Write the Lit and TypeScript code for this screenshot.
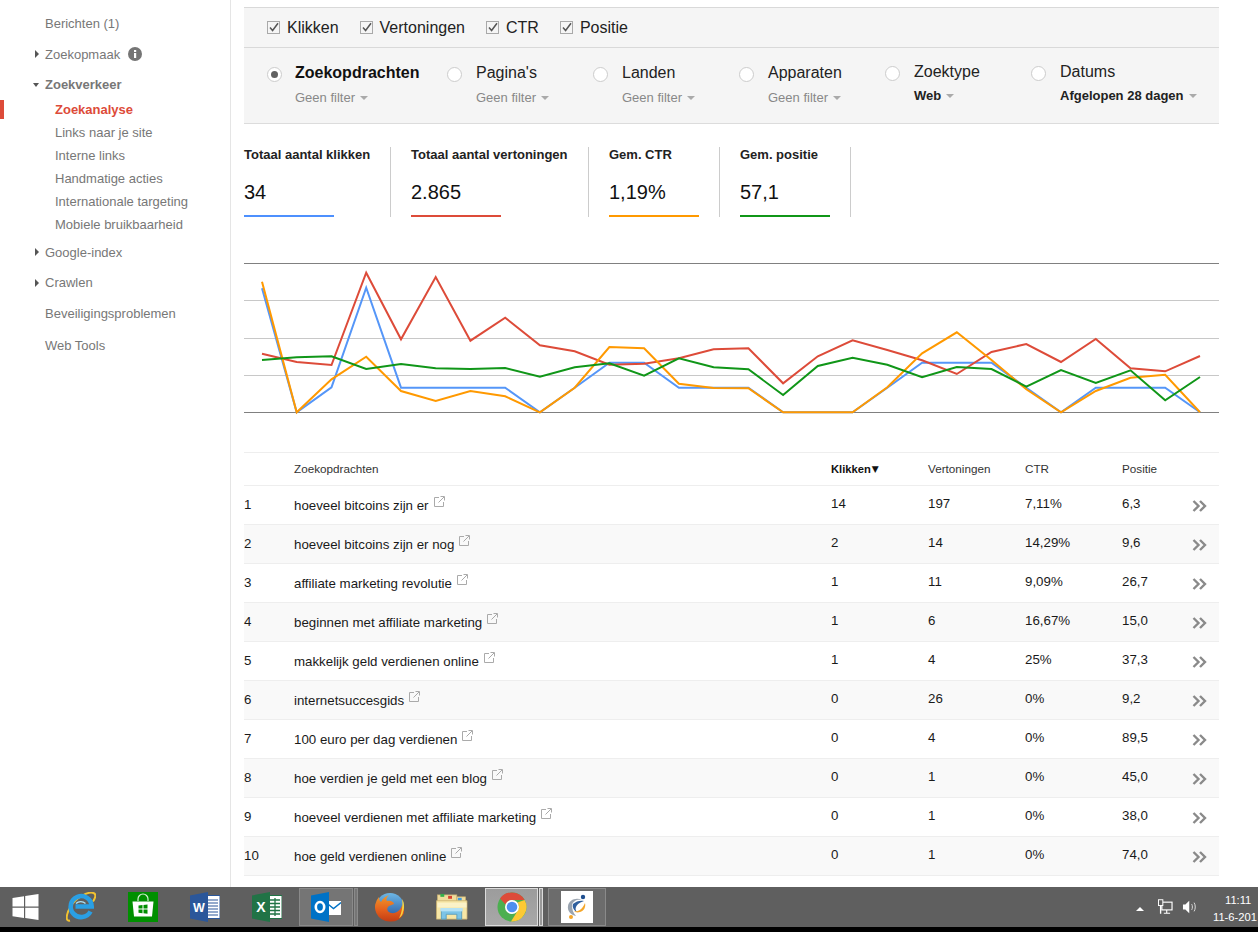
import { LitElement, html, css, svg } from "lit";
import { customElement } from "lit/decorators.js";

const red = [353.7,362,365,272.7,339.3,277,340.7,317.7,345.3,351.3,364.7,363.7,358.3,349.3,348.3,383.3,356.3,340.3,350,360.3,374,352,344,362,339,368.3,371.3,356];
const blue = [288.3,412.3,387.3,287.7,387.7,387.7,387.7,387.7,412.3,387.7,362.7,362.7,387.7,387.7,387.7,412.3,412.3,412.3,387.7,362.7,362.7,362.7,387.7,412.3,387.7,387.7,387.7,412.3];
const orange = [281.7,412.3,379.3,356.7,391,401,391,396.3,412.3,387.7,347,348.3,383.7,388,388.3,412.3,412.3,412.3,387.3,353.3,332.3,360,389.3,412.3,391,377.7,374.7,412.3];
const green = [360,357.3,356.3,369,364,368.3,369,368,376.7,367.3,363.3,375.7,358.3,367.3,369.3,395,366,357.7,364.7,377.3,367,369,386.7,370,383,370.3,400.3,377];
const pts = (a: number[]) => a.map((y, i) => `${(262 + i * 34.74).toFixed(1)},${y}`).join(" ");

const rows = [
  ["1","hoeveel bitcoins zijn er","14","197","7,11%","6,3"],
  ["2","hoeveel bitcoins zijn er nog","2","14","14,29%","9,6"],
  ["3","affiliate marketing revolutie","1","11","9,09%","26,7"],
  ["4","beginnen met affiliate marketing","1","6","16,67%","15,0"],
  ["5","makkelijk geld verdienen online","1","4","25%","37,3"],
  ["6","internetsuccesgids","0","26","0%","9,2"],
  ["7","100 euro per dag verdienen","0","4","0%","89,5"],
  ["8","hoe verdien je geld met een blog","0","1","0%","45,0"],
  ["9","hoeveel verdienen met affiliate marketing","0","1","0%","38,0"],
  ["10","hoe geld verdienen online","0","1","0%","74,0"],
];

const extIcon = html`<svg class="ext" viewBox="0 0 11 11" width="11" height="11"><path d="M5 1.5H.5v9h9V6" fill="none" stroke="#aaa" stroke-width="1"/><path d="M4.5 6.5 10 1M6.5 .5h4v4" fill="none" stroke="#aaa" stroke-width="1"/></svg>`;
const chevrons = html`<svg class="chev" viewBox="0 0 15 12" width="15" height="12"><path d="M1.5 1 6.5 6 1.5 11M8 1l5 5-5 5" fill="none" stroke="#8a8a8a" stroke-width="2.4"/></svg>`;
const check = html`<svg class="cb" viewBox="0 0 13 13" width="13" height="13"><rect x=".5" y=".5" width="12" height="12" fill="#f5f5f5" stroke="#a9a9a9"/><path d="M3 6.5 5.6 9.5 11 2.2" fill="none" stroke="#555" stroke-width="1.5"/></svg>`;

const winIcon = html`<svg viewBox="0 0 26 26" width="27" height="26"><path fill="#fff" d="M0 4 11.5 2.3V12.5H0ZM12.7 2.1 26 0V12.5H12.7ZM0 13.7H11.5V24L0 22.3ZM12.7 13.7H26V26L12.7 24Z"/></svg>`;
const ieIcon = html`<svg viewBox="0 0 30 30" width="30" height="30"><path d="M4 28.500C-1 30 0 22 5 14 10 6 22-1 27.500 1 30.500 2 29.500 6 27 9.500" fill="none" stroke="#f2c230" stroke-width="2"/><path d="M24.500 19.500A10.500 10.500 0 1 1 25.700 14.500H9.500" fill="none" stroke="#2a9fe4" stroke-width="4.600"/><path d="M10 11.500a6.500 6 0 0 1 9.500 0" fill="none" stroke="#a9e2f8" stroke-width="1.300"/></svg>`;
const storeIcon = html`<svg viewBox="0 0 30 30" width="30" height="30"><rect width="30" height="30" fill="#008f00"/><path d="M10 9V7a5 5 0 0 1 10 0v2" fill="none" stroke="#d6efd6" stroke-width="1.200"/><path d="M4.500 9.500h21l-1.500 15H6z" fill="#fff"/><path fill="#008f00" d="M10.500 13.500 14.500 13v3.600h-4ZM15.500 13l4-.6v4.200h-4ZM10.500 17.600h4v3.600l-4-.5ZM15.500 17.600h4v4.200l-4-.6Z"/></svg>`;
const wordIcon = html`<svg viewBox="0 0 30 30" width="30" height="30"><rect x="16" y="3.500" width="14" height="23" fill="#fff" stroke="#2b579a"/><path d="M18 8h10M18 11h10M18 14h10M18 17h10M18 20h10M18 23h10" stroke="#2b579a" stroke-width="1.200"/><path d="M0 3.500 18 0V30L0 26.500Z" fill="#2b579a"/><text x="9" y="20" text-anchor="middle" class="ico-t" font-size="12.500">W</text></svg>`;
const excelIcon = html`<svg viewBox="0 0 30 30" width="30" height="30"><rect x="16" y="3.500" width="14" height="23" fill="#fff" stroke="#217346"/><path d="M18 8h10M18 11.500h10M18 15h10M18 18.500h10M18 22h10M23 6v18" stroke="#217346" stroke-width="1.300"/><path d="M0 3.500 18 0V30L0 26.500Z" fill="#217346"/><text x="9" y="20" text-anchor="middle" class="ico-t" font-size="14">X</text></svg>`;
const outlookIcon = html`<svg viewBox="0 0 30 30" width="30" height="30"><rect x="15" y="9" width="15" height="14" fill="#fff"/><path d="M15 10.500 22.500 16.500 30 10.500" fill="none" stroke="#0072c6" stroke-width="1.400"/><path d="M0 3.500 18 0V30L0 26.500Z" fill="#0072c6"/><ellipse cx="9" cy="15" rx="4.200" ry="5" fill="none" stroke="#fff" stroke-width="2.600"/></svg>`;
const foxIcon = html`<svg viewBox="0 0 30 30" width="30" height="30"><defs><linearGradient id="fx" x1="0" y1="0" x2="0" y2="1"><stop offset="0" stop-color="#f09a2c"/><stop offset=".55" stop-color="#e5611d"/><stop offset="1" stop-color="#c23d14"/></linearGradient><linearGradient id="gl" x1="0" y1="0" x2="0" y2="1"><stop offset="0" stop-color="#6db7e6"/><stop offset="1" stop-color="#1f4f9a"/></linearGradient></defs><circle cx="15" cy="15" r="14" fill="url(#gl)"/><path d="M15 29.500A14.500 14.500 0 0 1 4 5C4 8 5 9 6 10 8 6 11 4 14 3 11 6 11 8 12 9 15 8 19 10 19 12L14 14C11 16 12 20 16 21 21 22 26 18 27 13 29 16 30 20 28 23A14.500 14.500 0 0 1 15 29.500Z" fill="url(#fx)"/><path d="M27 7c2 3 3 8 1 13 0 2-2 5-4 6 3-5 4-13 3-19Z" fill="#f7d23e"/></svg>`;
const folderIcon = html`<svg viewBox="0 0 32 32" width="32" height="31"><rect x="1" y="3" width="20" height="8" fill="#f0dc9c" stroke="#c8b070" stroke-width=".7"/><rect x="4" y="2" width="4" height="3" fill="#34b04a"/><rect x="12" y="4" width="4" height="3" fill="#d8432f"/><rect x="21" y="5" width="9" height="6" fill="#f0dc9c" stroke="#c8b070" stroke-width=".7"/><rect x="22" y="6" width="4" height="3" fill="#3f9be0"/><path d="M0 9h31.500v19H0Z" fill="#f6e6a6" stroke="#c8b070" stroke-width=".8"/><path d="M1 11h30v5H1Z" fill="#fbf2c8"/><path d="M5 28V18h21v10h-5v-5H10v5Z" fill="#7cc4e6" stroke="#4a93b8" stroke-width=".8"/><path d="M4 16.500h23V20H4Z" fill="#b5e2f5"/></svg>`;
const chromeIcon = html`<svg viewBox="0 0 30 30" width="30" height="30"><circle cx="15" cy="15" r="14.500" fill="#4caf50"/><path d="M15 .5A14.500 14.500 0 0 1 27.600 8H15a7 7 0 0 0-6.500 4.500L3 6.500A14.500 14.500 0 0 1 15 .5Z" fill="#dd4b39"/><path d="M27.600 8A14.500 14.500 0 0 1 14 29.500l6.200-10A7 7 0 0 0 20.500 10.500Z" fill="#fcc934"/><circle cx="15" cy="15" r="7" fill="#fff"/><circle cx="15" cy="15" r="5.300" fill="#4d8ff0"/></svg>`;
const appIcon = html`<svg viewBox="0 0 32 32" width="32" height="32"><rect width="32" height="32" fill="#fff"/><path d="M7 15C8 9 15 6 21 9c-5-1-9 1-10 5 0 4 1 8 4 11-5-1-9-5-8-10Z" fill="#9aa4b0"/><path d="M12 13c3-3 8-4 11-3-3 1-7 3-8 6-1 2 0 4 1 5-3-1-5-5-4-8Z" fill="#2f5f9e"/><path d="M24 12c1 4-1 8-5 9-3 1-5 0-6-1 4 1 8-1 11-8Z" fill="#f4a62a"/><circle cx="22" cy="6" r="2.200" fill="#1f4f8f"/><circle cx="10" cy="26" r="2" fill="#f4a62a"/></svg>`;
const netIcon = html`<svg viewBox="0 0 15 16" width="15" height="16"><rect x="4" y="3" width="10.500" height="8" fill="none" stroke="#fff" stroke-width="1.200"/><path d="M9 11v3M6 14.500h6.500" stroke="#fff" stroke-width="1.200"/><rect x=".5" y=".5" width="4.500" height="6" fill="#5f5f5f" stroke="#fff"/><path d="M2.700 6.500V15" stroke="#fff" stroke-width="1.400"/></svg>`;
const volIcon = html`<svg viewBox="0 0 16 16" width="16" height="16"><path d="M1 5.500h2.500L7.500 1.500v13l-4-4H1Z" fill="#fff"/><path d="M10 5c1 1.500 1 4.500 0 6M12.500 3.500c1.600 2.500 1.600 6.500 0 9" fill="none" stroke="#ddd" stroke-width="1"/></svg>`;
const infoIcon = html`<svg class="info" viewBox="0 0 14 14" width="14" height="14"><circle cx="7" cy="7" r="7" fill="#757575"/><rect x="6" y="6" width="2.200" height="5" fill="#fff"/><rect x="6" y="3" width="2.200" height="2" fill="#fff"/></svg>`;

@customElement("app-root")
export class AppRoot extends LitElement {
  static styles = css`
    :host { display: block; height: 932px; overflow: hidden; font-family: "Liberation Sans", Arial, sans-serif; background: #fff; color: #000; }
    .page { display: flex; height: 887px; overflow: hidden; }
    .side { width: 230px; flex: none; border-right: 1px solid #e5e5e5; padding-top: 8px; font-size: 13px; color: #777; }
    .nav { display: flex; align-items: center; padding-left: 45px; position: relative; box-sizing: border-box; }
    .h30 { height: 30px; } .h31 { height: 31px; } .h32 { height: 32px; }
    .first-nav { height: 31px; padding-bottom: 1px; }
    .dn { padding-top: 1px; }
    .over { margin-bottom: -1px; }
    .tri-r { position: absolute; left: 35px; top: 50%; margin-top: -4px; border-left: 4px solid #555; border-top: 4px solid transparent; border-bottom: 4px solid transparent; }
    .tri-d { position: absolute; left: 33px; top: 50%; margin-top: -1px; border-top: 4px solid #555; border-left: 3.5px solid transparent; border-right: 3.5px solid transparent; }
    .strong { font-weight: bold; }
    .info { margin-left: 8px; }
    .sub { height: 23px; display: flex; align-items: center; padding-left: 55px; position: relative; }
    .sub.on { color: #dd4b39; font-weight: bold; }
    .sub.on::before { content: ""; position: absolute; left: 0; top: 2px; width: 4px; height: 19px; background: #dd4b39; }

    .main { width: 975px; margin-left: 13px; padding-top: 7px; flex: none; }
    .bar1 { display: flex; align-items: center; height: 39px; background: #f5f5f5; border-top: 1px solid #d9d9d9; border-bottom: 1px solid #d9d9d9; padding-left: 23px; font-size: 16px; color: #222; }
    .ck { display: flex; align-items: center; margin-right: 21px; }
    .cb { margin-right: 7px; margin-top: -1px; }
    .bar2 { display: flex; height: 75px; background: #f5f5f5; border-bottom: 1px solid #dcdcdc; padding-left: 23px; }
    .opt { width: 146px; flex: none; display: flex; padding-top: 15px; box-sizing: border-box; }
    .opt.first { width: 180px; }
    .opt.alt { padding-top: 14px; }
    .radio { width: 13px; height: 13px; border: 1px solid #ccc; border-radius: 50%; background: #fff; margin: 4px 14px 0 0; flex: none; display: flex; align-items: center; justify-content: center; }
    .opt.first .radio { margin-right: 13px; }
    .radio i { width: 7px; height: 7px; border-radius: 50%; background: #616161; }
    .opt-l { font-size: 16px; line-height: 20px; color: #222; }
    .opt.first .opt-l { font-weight: bold; color: #111; }
    .opt-s { font-size: 13px; line-height: 16px; margin-top: 7px; color: #888; display: flex; align-items: center; white-space: nowrap; }
    .opt.alt .opt-s { margin-top: 6px; color: #222; font-weight: bold; }
    .car { margin-left: 5px; border-top: 4px solid #aaa; border-left: 4px solid transparent; border-right: 4px solid transparent; }

    .metrics { display: flex; padding-top: 23px; }
    .m { height: 70px; border-right: 1px solid #ccc; padding-left: 20px; box-sizing: border-box; display: flex; flex-direction: column; }
    .m:first-child { padding-left: 0; }
    .m-l { font-size: 13px; font-weight: bold; line-height: 16px; color: #222; }
    .m-v { font-size: 20px; line-height: 24px; margin-top: 17px; color: #111; }
    .m-b { width: 90px; height: 2px; margin-top: auto; }
    .chart { display: block; margin-top: 38px; }

    .tbl { margin-top: 27px; border-top: 1px solid #eee; font-size: 13.3px; color: #1a1a1a; }
    .tr { display: grid; grid-template-columns: 50px 537px 97px 97px 97px 70px 27px; align-items: center; height: 38px; border-bottom: 1px solid #eee; }
    .tr.head { height: 32px; font-size: 11.7px; color: #333; padding-bottom: 0; }
    .tr.head span { margin-top: -1px; }
    .tr.head .sort { font-weight: bold; color: #111; font-size: 11.2px; display: flex; align-items: center; }
    .arrow { font-size: 9px; margin-left: 1px; font-weight: normal; font-family: "DejaVu Sans", sans-serif; }
    .tr.alt { background: #f9f9f9; }
    .idx { padding-bottom: 2px; }
    .num { padding-bottom: 4px; }
    .q { display: flex; align-items: center; }
    .ext { margin: -7px 0 0 5px; }
    .chev { margin-top: 2px; }

    .task { height: 40px; background: #5f5f5f; border-bottom: 5px solid #000; display: flex; align-items: center; color: #fff; overflow: hidden; }
    .slot { width: 62px; flex: none; display: flex; align-items: center; justify-content: center; }
    .slot.win { width: 50px; }
    .btn { height: 38px; flex: none; display: flex; align-items: center; justify-content: center; box-sizing: border-box; border: 1px solid #8a8a8a; background: #757575; margin-left: 1px; }
    .btn.w54 { width: 54px; }
    .btn.w58 { width: 58px; margin-left: 5px; background: #6c6c6c; }
    .sliver { width: 4px; height: 38px; flex: none; border: 1px solid #8a8a8a; background: #757575; box-sizing: border-box; margin-left: 1px; margin-right: 1px; }
    .btn.act { background: linear-gradient(#9c9c9c, #a8a8a8); border-color: #dcdcdc; margin-left: 2px; width: 53px; }
    .sliver.act { border-color: #dcdcdc; background: #9a9a9a; margin-right: 0; }
    .tray { margin-left: auto; display: flex; align-items: center; width: 128px; flex: none; }
    .up { border-bottom: 4px solid #fff; border-left: 4.5px solid transparent; border-right: 4.5px solid transparent; margin: 3px 14px 0 6px; }
    .tray svg { margin-right: 9px; }
    .clock { margin-left: 7px; width: 45px; font-size: 11.2px; line-height: 17px; flex: none; white-space: nowrap; padding-top: 3px; }
    .time { padding-left: 12px; }
    .ico-t { fill: #fff; font-family: "Liberation Sans", Arial, sans-serif; font-weight: bold; }
  `;

  private metric(label: string, value: string, color: string, width: number) {
    return html`<div class="m" style="width:${width}px">
      <div class="m-l">${label}</div>
      <div class="m-v">${value}</div>
      <div class="m-b" style="background:${color}"></div>
    </div>`;
  }

  private opt(label: string, sub: string, cls = "") {
    return html`<div class="opt ${cls}">
      <div class="radio">${cls === "first" ? html`<i></i>` : ""}</div>
      <div><div class="opt-l">${label}</div><div class="opt-s">${sub}<span class="car"></span></div></div>
    </div>`;
  }

  render() {
    return html`
      <div class="page">
        <nav class="side">
          <div class="nav first-nav">Berichten (1)</div>
          <div class="nav h30"><span class="tri-r"></span>Zoekopmaak ${infoIcon}</div>
          <div class="nav h30 over strong"><span class="tri-d"></span>Zoekverkeer</div>
          <div class="sub on">Zoekanalyse</div>
          <div class="sub">Links naar je site</div>
          <div class="sub">Interne links</div>
          <div class="sub">Handmatige acties</div>
          <div class="sub">Internationale targeting</div>
          <div class="sub">Mobiele bruikbaarheid</div>
          <div class="nav h31 dn"><span class="tri-r"></span>Google-index</div>
          <div class="nav h31"><span class="tri-r"></span>Crawlen</div>
          <div class="nav h31">Beveiligingsproblemen</div>
          <div class="nav h32">Web Tools</div>
        </nav>
        <main class="main">
          <div class="bar1">
            ${["Klikken", "Vertoningen", "CTR", "Positie"].map((l) => html`<div class="ck">${check}${l}</div>`)}
          </div>
          <div class="bar2">
            ${this.opt("Zoekopdrachten", "Geen filter", "first")}
            ${this.opt("Pagina's", "Geen filter")}
            ${this.opt("Landen", "Geen filter")}
            ${this.opt("Apparaten", "Geen filter")}
            ${this.opt("Zoektype", "Web", "alt")}
            ${this.opt("Datums", "Afgelopen 28 dagen", "alt")}
          </div>
          <div class="metrics">
            ${this.metric("Totaal aantal klikken", "34", "#4d90fe", 147)}
            ${this.metric("Totaal aantal vertoningen", "2.865", "#dd4b39", 198)}
            ${this.metric("Gem. CTR", "1,19%", "#ff9900", 131)}
            ${this.metric("Gem. positie", "57,1", "#109618", 131)}
          </div>
          <svg class="chart" viewBox="244 255 975 170" width="975" height="170">
            ${[300.5, 338.5, 375.5].map((y) => svg`<line x1="244" x2="1219" y1=${y} y2=${y} stroke="#c8c8c8" stroke-width="1"/>`)}
            ${[263.5, 412.5].map((y) => svg`<line x1="244" x2="1219" y1=${y} y2=${y} stroke="#808080" stroke-width="1"/>`)}
            ${[[blue, "#5596f8"], [red, "#dd4b39"], [orange, "#ff9900"], [green, "#109618"]].map(([a, c]) => svg`<polyline points=${pts(a as number[])} fill="none" stroke=${c as string} stroke-width="2"/>`)}
          </svg>
          <div class="tbl">
            <div class="tr head">
              <span></span><span>Zoekopdrachten</span><span class="sort">Klikken<i class="arrow">▼</i></span><span>Vertoningen</span><span>CTR</span><span>Positie</span><span></span>
            </div>
            ${rows.map((r, i) => html`<div class="tr ${i % 2 ? "alt" : ""}">
              <span class="idx">${r[0]}</span>
              <span class="q">${r[1]}${extIcon}</span>
              <span class="num">${r[2]}</span>
              <span class="num">${r[3]}</span>
              <span class="num">${r[4]}</span>
              <span class="num">${r[5]}</span>
              ${chevrons}
            </div>`)}
          </div>
        </main>
      </div>
      <footer class="task">
        <div class="slot win">${winIcon}</div>
        <div class="slot">${ieIcon}</div>
        <div class="slot">${storeIcon}</div>
        <div class="slot">${wordIcon}</div>
        <div class="slot">${excelIcon}</div>
        <div class="btn w54">${outlookIcon}</div>
        <div class="sliver"></div>
        <div class="slot">${foxIcon}</div>
        <div class="slot">${folderIcon}</div>
        <div class="btn act">${chromeIcon}</div>
        <div class="sliver act"></div>
        <div class="btn w58">${appIcon}</div>
        <div class="tray">
          <span class="up"></span>
          ${netIcon}${volIcon}
          <div class="clock"><div class="time">11:11</div><div>11-6-201</div></div>
        </div>
      </footer>
    `;
  }
}
